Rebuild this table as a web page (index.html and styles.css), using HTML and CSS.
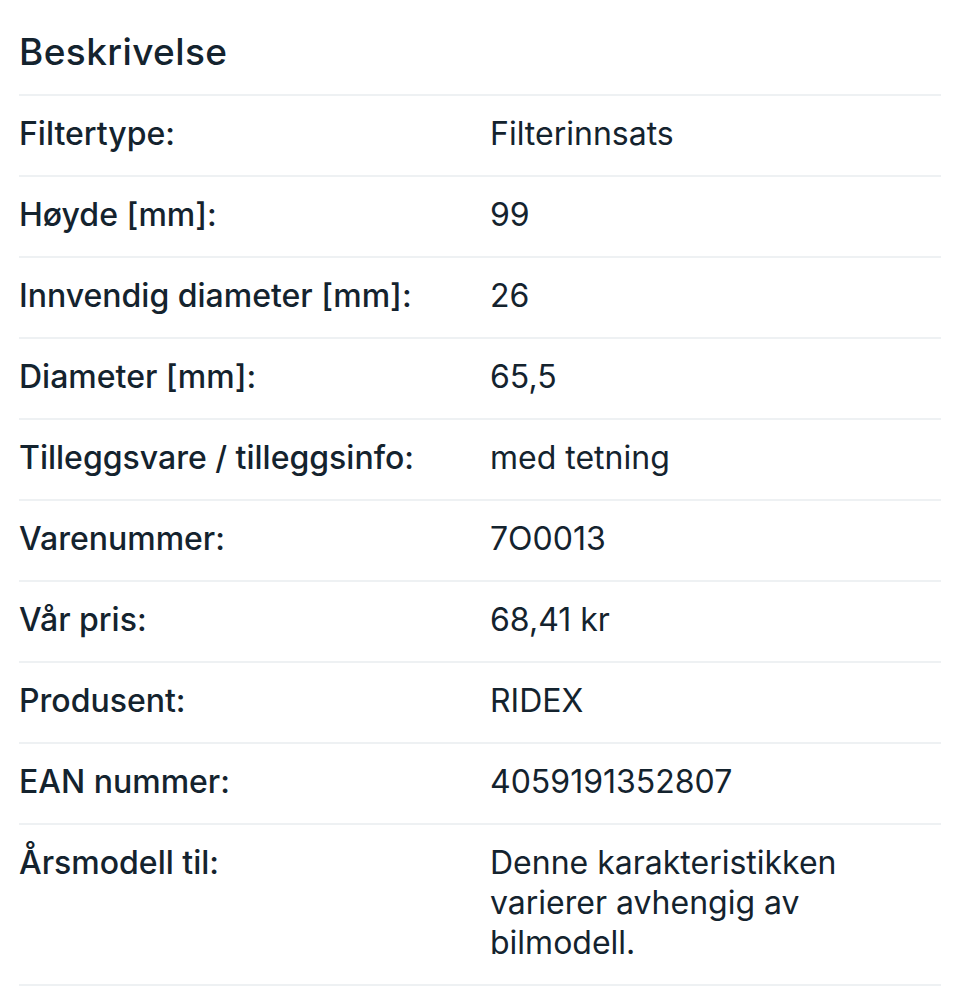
FILE: index.html
```html
<!DOCTYPE html>
<html lang="no">
<head>
<meta charset="utf-8">
<title>Beskrivelse</title>
<link rel="stylesheet" href="styles.css">
</head>
<body>
<section class="specs">
  <h2 class="title">Beskrivelse</h2>
  <dl class="list">
    <div class="row"><dt>Filtertype:</dt><dd>Filterinnsats</dd></div>
    <div class="row"><dt>Høyde [mm]:</dt><dd>99</dd></div>
    <div class="row"><dt>Innvendig diameter [mm]:</dt><dd>26</dd></div>
    <div class="row"><dt>Diameter [mm]:</dt><dd>65,5</dd></div>
    <div class="row"><dt>Tilleggsvare / tilleggsinfo:</dt><dd>med tetning</dd></div>
    <div class="row"><dt>Varenummer:</dt><dd>7O0013</dd></div>
    <div class="row"><dt>Vår pris:</dt><dd>68,41 kr</dd></div>
    <div class="row"><dt>Produsent:</dt><dd>RIDEX</dd></div>
    <div class="row"><dt>EAN nummer:</dt><dd>4059191352807</dd></div>
    <div class="row tall"><dt>Årsmodell til:</dt><dd>Denne karakteristikken varierer avhengig av bilmodell.</dd></div>
  </dl>
</section>
</body>
</html>
```
FILE: styles.css
```css
* { box-sizing: border-box; }
html, body { margin: 0; padding: 0; background: #fff; }
body {
  font-family: Inter, "Liberation Sans", sans-serif;
  color: #14232e;
}
.specs {
  padding: 0 19px;
}
.title {
  margin: 0;
  height: 96px;
  display: flex;
  align-items: center;
  padding-top: 8px;
  font-size: 37px;
  font-weight: 500;
  letter-spacing: 0.4px;
  border-bottom: 2px solid #eef1f3;
}
.list { margin: 0; }
.row {
  display: grid;
  grid-template-columns: 471px 1fr;
  align-items: center;
  height: 81px;
  border-bottom: 2px solid #eef1f3;
  font-size: 32px;
  line-height: 40px;
  padding-bottom: 3px;
}
.row dt { font-weight: 500; margin: 0; }
.row dd { margin: 0; font-weight: 400; }
.row.tall {
  height: auto;
  align-items: start;
  padding: 18px 0 21px;
}
.row.tall dd { max-width: 380px; }
```
